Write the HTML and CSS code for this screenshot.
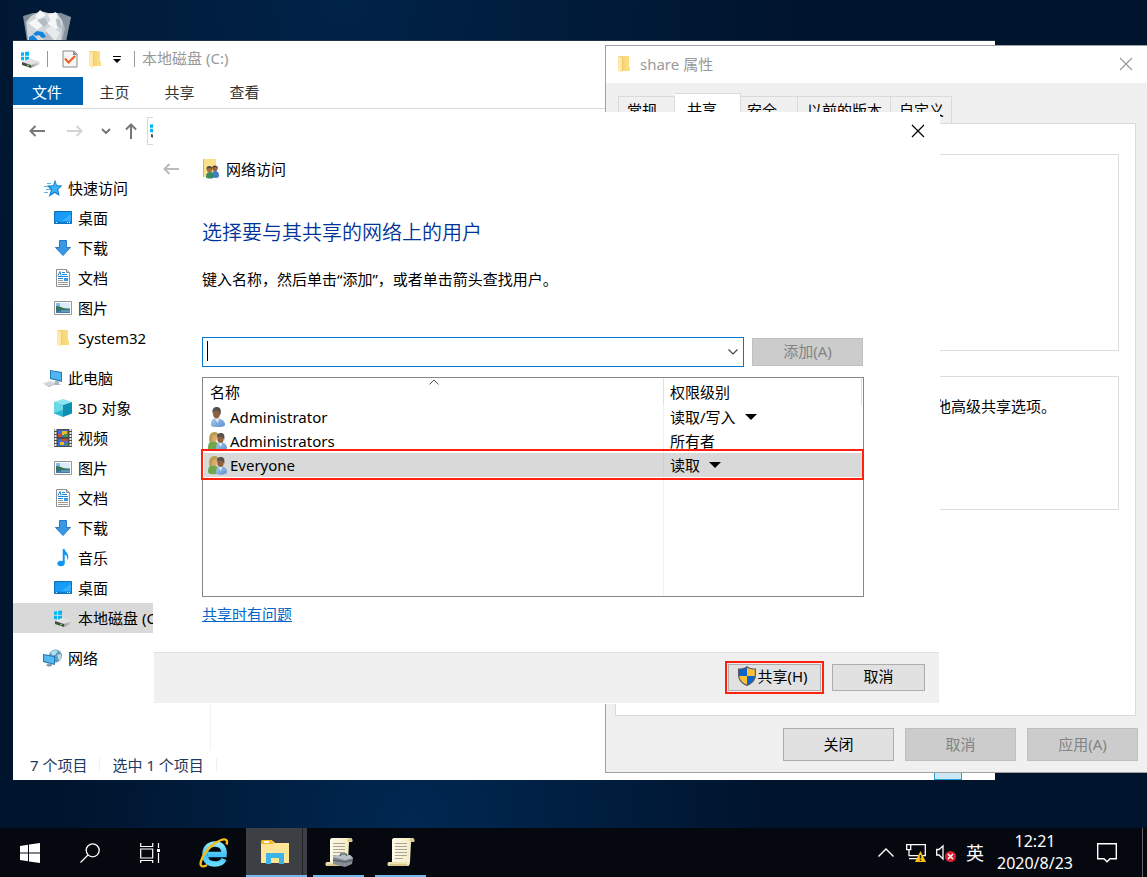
FILE: index.html
```html
<!DOCTYPE html>
<html lang="zh-CN">
<head>
<meta charset="utf-8">
<title>网络访问</title>
<link rel="stylesheet" href="styles.css">
</head>
<body>
<svg class="sprite" aria-hidden="true">
  <defs>
    <linearGradient id="g-blue" x1="0" y1="0" x2="1" y2="1"><stop offset="0" stop-color="#1593ee"/><stop offset=".6" stop-color="#18a0fb"/><stop offset=".62" stop-color="#3cb0ff"/><stop offset="1" stop-color="#2aa6fb"/></linearGradient>
    <linearGradient id="g-folder" x1="0" y1="0" x2="1" y2="0"><stop offset="0" stop-color="#f3cf6d"/><stop offset="1" stop-color="#fddf86"/></linearGradient>
    <linearGradient id="g-drive" x1="0" y1="0" x2="1" y2="0"><stop offset="0" stop-color="#9a9a9a"/><stop offset="1" stop-color="#e0e0e0"/></linearGradient>
    <linearGradient id="g-ie" x1="0" y1="0" x2="0" y2="1"><stop offset="0" stop-color="#8be6ff"/><stop offset=".6" stop-color="#3cc0f5"/><stop offset="1" stop-color="#64dcff"/></linearGradient>
    <linearGradient id="g-page" x1="0" y1="0" x2="1" y2="0"><stop offset="0" stop-color="#fffdf0"/><stop offset="1" stop-color="#f3e9bd"/></linearGradient>
    <linearGradient id="g-man" x1="0" y1="0" x2="1" y2="1"><stop offset="0" stop-color="#a9cdf0"/><stop offset="1" stop-color="#5b8fce"/></linearGradient>
  </defs>
  <symbol id="i-drive" viewBox="0 0 20 18">
    <path fill="#00b7f1" d="M1 2.500l3-.3v3.600H1zM5 2L9 1.600v4.200H5zM1 6.800h3v3.600l-3-.4zM5 6.800h4V11l-4-.5z"/>
    <path fill="#e2e2e2" d="M2 12l8-3.500 9.500 3L11 15z"/><path fill="#4a4a4a" d="M2 12l9 3v3L2 15z"/>
    <path fill="url(#g-drive)" d="M11 15l8.500-3.500v3L11 18z"/><circle cx="8" cy="15.500" r="1" fill="#5fe04c"/>
  </symbol>
  <symbol id="i-folder" viewBox="0 0 14 18">
    <path fill="url(#g-folder)" d="M1 1h11v10l1 1v4H3z"/><path fill="#ffe9a8" d="M1 1l4 2v15l-4-2z"/><path fill="#eec768" d="M5 4l1-1v12l-1 1z"/>
  </symbol>
  <symbol id="i-check" viewBox="0 0 16 18">
    <path fill="#f6f6f6" stroke="#8a8a8a" d="M1 1h11l3 3v13H1z"/><path fill="#8a8a8a" d="M11 1l4 4h-4z"/>
    <path fill="none" stroke="#f05a1c" stroke-width="2" d="M3 8.500l3.500 4L13 6"/>
  </symbol>
  <symbol id="i-star" viewBox="0 0 20 18">
    <path fill="#1583d2" d="M12 .5l2 5.800 5.500.3-4.200 3.900 1.300 6.500-5-3-6 4 2.300-6.700L4 6.500l6-.2z"/>
    <path fill="#3db2f6" d="M12 3l1.400 4.300 4 .3-3.400 3 1 4-3.500-2.200-3.800 2.400 1.500-4.300L6.500 7.500l4-.2z"/>
    <path stroke="#59b4ee" fill="none" d="M4 4.500h4M1 7.500h4M3 10.500h4M1 13.500h4"/>
  </symbol>
  <symbol id="i-desktop" viewBox="0 0 20 18">
    <path fill="url(#g-blue)" stroke="#0d6fb8" d="M1.500 2.500h17v12h-17z"/><path fill="#0f7ccb" d="M2 12.500h16v2H2z"/><path fill="#dff3ff" d="M3 13h1v1H3zM16 13h1v1h-1zM14 13h1v1h-1z"/>
  </symbol>
  <symbol id="i-down" viewBox="0 0 20 18">
    <path fill="#3b97e3" stroke="#2478c4" d="M6.500 1.500h7v7h4L10 16.500 2.500 8.500h4z"/>
  </symbol>
  <symbol id="i-doc" viewBox="0 0 20 18">
    <path fill="#fdfdfd" stroke="#8f8f8f" d="M3.500.5h10l3 3v14h-13z"/><path fill="#c9c9c9" stroke="#8f8f8f" d="M13.500.5v3h3"/>
    <path stroke="#1a84d6" d="M9 3.500h3M9 5.500h5M5 7.500h10M5 9.500h5"/><path fill="none" stroke="#1a84d6" d="M5 6.500l2-4 1 4"/>
    <path fill="#3b97e3" d="M11 9h4v3h-4z"/><path stroke="#9b9b9b" d="M5 11.500h5M5 13.500h10M5 15.500h10"/>
  </symbol>
  <symbol id="i-pic" viewBox="0 0 20 18">
    <path fill="#fff" stroke="#959595" d="M1.500 2.500h17v13h-17z"/><path fill="#83bdec" d="M3 4h14v10H3z"/><path fill="#dcebf7" d="M7 4h10v5H7z"/>
    <path fill="#39745d" d="M3 7c3-.5 6 2.500 14 3v2H3z"/><path fill="#3d79ad" d="M3 11.500h14V14H3z"/><path fill="#8fbbd8" d="M8 11.500h9v1H8z"/>
  </symbol>
  <symbol id="i-pc" viewBox="0 0 20 18">
    <path fill="#277bb8" d="M7 1l12 2v10L7 10z"/><path fill="#4fb4ef" d="M8 2l10 2v7.500L8 9z"/><path fill="#a9b6c0" d="M12 11.500l4 1v2l2 1-5 .8-3-1.300 2-1z"/>
    <path fill="#d4d8dc" d="M0 14.500l7-2.500 6 2-7 3z"/><path fill="#a2a8ae" d="M0 14.500l6 2.500 7-3v.6L6 18z"/>
  </symbol>
  <symbol id="i-cube" viewBox="0 0 20 18">
    <path fill="#8ce5f0" d="M10 0l9 3-9 3-9-3z"/><path fill="#2cb6d1" d="M1 3l9 3v12l-9-3.500z"/><path fill="#0c8fb0" d="M10 6l9-3v11.500L10 18z"/><path fill="#6bd8e7" d="M1 3l9 3v5l-9 3z"/>
  </symbol>
  <symbol id="i-film" viewBox="0 0 20 18">
    <path fill="#4b4b4b" d="M1 0h18v18H1z"/><path stroke="#eee" stroke-width="2" stroke-dasharray="2 1" d="M2.500 0v18M17.500 0v18"/>
    <path fill="#3c6fd6" d="M5 1h10v7H5zM5 10h10v7H5z"/><path fill="#f0b82a" d="M9 2h5v4H9zM7 13h4v3H7z"/><path fill="#d64b2e" d="M5 5h4v3H5zM9 10h5v2H9z"/><path fill="#3d9a4b" d="M11 5h4v3h-4zM12 14h3v3h-3z"/>
  </symbol>
  <symbol id="i-note" viewBox="0 0 20 18">
    <ellipse cx="8" cy="14.500" rx="3.600" ry="2.800" fill="#0d97f2"/><path fill="#0d97f2" d="M9.700 0h2c.3 3.500 4.300 4 3.600 9.500-.3 1-.8 1.500-1 1.300.5-3-.8-4.500-2.600-5v9h-2z"/>
  </symbol>
  <symbol id="i-net" viewBox="0 0 20 18">
    <circle cx="12.500" cy="7" r="6.500" fill="#5e9dbd"/><path fill="#b9dceb" d="M8 3c2-2 5-2.500 7-1l-3 4-3 1zM14 6l4-1c1 3 0 6-2 7z"/>
    <path fill="#2477b5" d="M0 5l12 2v9L0 13z"/><path fill="#55baf2" d="M1 6.200l10 1.700v6.800L1 12z"/><path fill="#8c9aa5" d="M5 14.300l4 1v1.500l-3 1-3-1.300z"/>
  </symbol>
  <symbol id="i-man" viewBox="0 0 20 20">
    <path fill="url(#g-man)" d="M3 18c0-5 2-7 5-7 5 0 9 3 9 6.500 0 2-3 2.500-7 2.500s-7 0-7-2z"/><path fill="#e8eef5" d="M6 11l4 5 1-5z"/>
    <ellipse cx="8.500" cy="6" rx="3.700" ry="5.500" fill="#8d6242"/><path fill="#51504e" d="M4.500 6C4 1 6.500 0 9 0c3.500 0 4.500 3 3.500 8-1-4-3-5-7-4z"/>
  </symbol>
  <symbol id="i-group" viewBox="0 0 20 20">
    <path fill="#6fa64e" d="M0 17c0-5 2-7 5-7s6 2 6 7c0 3-11 3-11 0z"/><ellipse cx="6" cy="6.500" rx="3" ry="4.500" fill="#dfaa72"/>
    <path fill="#b8a04e" d="M1.500 11C0 4 3 1 6.500 1c3-.2 4 2 3.500 4C8 4 6 4 5 5c-1 2-1 4-.5 6z"/>
    <path fill="url(#g-man)" d="M8 18c0-5 2-7 4.500-7 4 0 6.500 3 6.500 6s-11 4-11 1z"/><path fill="#edf2f8" d="M10 11l3 5 1-5z"/>
    <ellipse cx="12.500" cy="7.500" rx="3.200" ry="4.500" fill="#8d6242"/><path fill="#54524f" d="M9 6.500c-.3-4 2-4.500 4-4.500 3 0 4 2 3.200 7-1-3-2.500-4-5-3.500z"/>
  </symbol>
  <symbol id="i-share" viewBox="0 0 18 20">
    <path fill="#fbe08c" d="M1 0h13v18H1z"/><path fill="#d9b65c" d="M1 0h1v18H1z"/>
    <path fill="#417fc4" d="M10 16c0-3 1-4 3-4 3 0 4 2 4 5s-7 2-7 0z"/><circle cx="13" cy="9.500" r="2.600" fill="#98633c"/><path fill="#4a3b30" d="M10 9c0-3.500 6-3.500 6 .5-1-1.500-3-2-6-.5z"/>
    <path fill="#3b8a64" d="M4 18c0-4 2-5 4-5s4 1 4 5c0 2-8 2-8 0z"/><circle cx="7.500" cy="10.500" r="2.800" fill="#a4703c"/><path fill="#4c4435" d="M4.500 10C4 6 10.500 6 10.500 10.500 9 8.500 7 8.500 4.500 10z"/>
  </symbol>
  <symbol id="i-shield" viewBox="0 0 18 20">
    <path fill="#585c60" d="M9 0c2 2 5 2.500 9 2.500V9c0 5-4 9-9 11-5-2-9-6-9-11V2.500C4 2.500 7 2 9 0z"/>
    <path fill="#0a64cc" d="M9 1.500V10H1.200V3.500C4.500 3.500 7 3 9 1.500zM9 10h7.700c-.5 4-3.500 7-7.700 8.600z"/><path fill="#ffbf35" d="M9 1.500V10h7.800V3.500C13.500 3.500 11 3 9 1.500zM9 10H1.300c.5 4 3.500 7 7.700 8.600z"/>
  </symbol>
  <symbol id="i-back" viewBox="0 0 16 12"><path fill="none" stroke="currentColor" stroke-width="2" d="M6.500 1L1.500 6l5 5M1.500 6H16"/></symbol>
  <symbol id="i-fwd" viewBox="0 0 16 12"><path fill="none" stroke="currentColor" stroke-width="2" d="M9.500 1l5 5-5 5M14.500 6H0"/></symbol>
  <symbol id="i-x" viewBox="0 0 14 14"><path fill="none" stroke="currentColor" stroke-width="1.200" d="M1 1l12 12M13 1L1 13"/></symbol>
  <symbol id="i-chev" viewBox="0 0 10 6"><path fill="none" stroke="currentColor" stroke-width="1.200" d="M.5.5L5 5 9.500.5"/></symbol>
  <symbol id="i-scroll" viewBox="0 0 28 30">
    <path fill="url(#g-page)" d="M5 3c0-1 1-2 2-2h18c2 0 3 2 2 4h-3l-1 20c0 2-1 4-2 4H2c-2 0-2-4 0-4h3z"/><path fill="#d9c98c" d="M23 5c-1-2 0-4 2-4s3 2 2 4zM1 26h18l2 3H3c-1 0-2-1-2-3z"/><path fill="#efe3b0" d="M2 25h18v2H2z"/>
    <path stroke="#a9a39b" d="M8 6.500h12M8 9.500h12M8 12.500h12M8 15.500h12M8 18.500h12M8 21.500h8"/>
  </symbol>
</svg>

<main class="desktop">
  <svg class="recycle" viewBox="0 0 48 32" aria-label="回收站">
    <path fill="#a9b4be" opacity=".75" d="M0 7l10-3h28l10 4-5 24H4z"/><path fill="#cfd5da" d="M3 13l5-6 9-5 8 2 9 0 5 7 3 8-3 13H5z"/>
    <path fill="#f4f6f7" d="M12 8l5-7 6 5-6 4zM25 6l8-3 2 6-7 3zM5 14l9-5 8 6-8 6zM24 14l7-5 8 6-7 6z"/>
    <path fill="#b3bcc4" d="M14 11l8-2 3 5-4 4zM33 10l4 1 2 9-5-3zM20 26l6-6 7 5-4 7h-9z"/><path fill="#e6eaed" d="M22 21l7-4 8 7-5 8z"/>
    <path fill="#0f86dc" d="M10 25l4-3 6 1 3 5-4 1-3-3-3 1zM6 28l4-2 4 4v2H6z"/><path fill="#8d98a3" opacity=".5" d="M40 8l8 0-5 24h-5z"/>
  </svg>

  <section class="window explorer">
    <header class="ex-title">
      <svg class="ic20"><use href="#i-drive"/></svg><i class="bar"></i>
      <svg class="ic-check"><use href="#i-check"/></svg><svg class="ic-folder"><use href="#i-folder"/></svg>
      <svg class="ic-more" viewBox="0 0 8 7"><path d="M0 0h8v1H0zM0 3h8L4 7z"/></svg><i class="bar"></i>
      <span>本地磁盘 (C:)</span>
    </header>
    <nav class="ribbon">
      <a class="file" href="#">文件</a><a href="#">主页</a><a href="#">共享</a><a href="#">查看</a>
    </nav>
    <div class="ex-nav">
      <svg class="arrow"><use href="#i-back"/></svg>
      <svg class="arrow dim"><use href="#i-fwd"/></svg>
      <svg class="recent" viewBox="0 0 10 6"><path fill="none" stroke="currentColor" stroke-width="2" d="M1 1l4 4 4-4"/></svg>
      <svg class="up" viewBox="0 0 12 16"><path fill="none" stroke="currentColor" stroke-width="2" d="M1 6.500l5-5 5 5M6 1.500V16"/></svg>
      <div class="address"><svg class="ic20"><use href="#i-drive"/></svg></div>
    </div>
    <div class="ex-body">
      <ul class="tree">
        <li><svg class="ic20"><use href="#i-star"/></svg>快速访问</li>
        <li class="sub"><svg class="ic20"><use href="#i-desktop"/></svg>桌面</li>
        <li class="sub"><svg class="ic20"><use href="#i-down"/></svg>下载</li>
        <li class="sub"><svg class="ic20"><use href="#i-doc"/></svg>文档</li>
        <li class="sub"><svg class="ic20"><use href="#i-pic"/></svg>图片</li>
        <li class="sub"><svg class="ic20"><use href="#i-folder"/></svg>System32</li>
        <li class="group"><svg class="ic20"><use href="#i-pc"/></svg>此电脑</li>
        <li class="sub"><svg class="ic20"><use href="#i-cube"/></svg>3D 对象</li>
        <li class="sub"><svg class="ic20"><use href="#i-film"/></svg>视频</li>
        <li class="sub"><svg class="ic20"><use href="#i-pic"/></svg>图片</li>
        <li class="sub"><svg class="ic20"><use href="#i-doc"/></svg>文档</li>
        <li class="sub"><svg class="ic20"><use href="#i-down"/></svg>下载</li>
        <li class="sub"><svg class="ic20"><use href="#i-note"/></svg>音乐</li>
        <li class="sub"><svg class="ic20"><use href="#i-desktop"/></svg>桌面</li>
        <li class="sub selected"><svg class="ic20"><use href="#i-drive"/></svg>本地磁盘 (C:)</li>
        <li class="group"><svg class="ic20"><use href="#i-net"/></svg>网络</li>
      </ul>
    </div>
    <footer class="status"><span>7 个项目</span><span>选中 1 个项目</span><i class="view"></i></footer>
  </section>

  <section class="window props">
    <header class="pr-title"><svg class="ic-folder"><use href="#i-folder"/></svg><span>share 属性</span><svg class="ic-x"><use href="#i-x"/></svg></header>
    <div class="pr-body">
      <div class="tabs"><button>常规</button><button class="on">共享</button><button class="safe">安全</button><button class="wide">以前的版本</button><button>自定义</button></div>
      <div class="panel">
        <div class="box box1"></div>
        <div class="box box2">他高级共享选项。</div>
      </div>
      <div class="actions"><button class="btn">关闭</button><button class="btn" disabled>取消</button><button class="btn" disabled>应用(A)</button></div>
    </div>
  </section>

  <section class="window dialog">
    <button class="close" aria-label="关闭"><svg class="ic-x"><use href="#i-x"/></svg></button>
    <header class="dl-title"><svg class="arrow"><use href="#i-back"/></svg><svg class="ic-share"><use href="#i-share"/></svg><span>网络访问</span></header>
    <div class="dl-body">
      <h1>选择要与其共享的网络上的用户</h1>
      <label for="user">键入名称，然后单击<span class="q">“</span>添加<span class="q">”</span>，或者单击箭头查找用户。</label>
      <div class="entry">
        <div class="combo"><i class="caret"></i><input id="user" type="text"><button aria-label="展开"><svg class="ic-chev"><use href="#i-chev"/></svg></button></div>
        <button class="btn" disabled>添加(A)</button>
      </div>
      <div class="list">
        <table>
          <thead><tr><th>名称<svg class="sort" viewBox="0 0 10 6"><path fill="none" stroke="#555" d="M.5 5.500L5 1l4.500 4.500"/></svg></th><th class="level">权限级别</th></tr></thead>
          <tbody>
            <tr><td><div class="cell"><svg class="ic-user"><use href="#i-man"/></svg>Administrator</div></td><td><button class="perm">读取/写入<i class="tri"></i></button></td></tr>
            <tr><td><div class="cell"><svg class="ic-user"><use href="#i-group"/></svg>Administrators</div></td><td>所有者</td></tr>
            <tr class="picked"><td><div class="cell"><svg class="ic-user"><use href="#i-group"/></svg>Everyone</div></td><td><button class="perm">读取<i class="tri"></i></button></td></tr>
            <tr class="rest"><td></td><td></td></tr>
          </tbody>
        </table>
      </div>
      <a class="help" href="#">共享时有问题</a>
    </div>
    <footer class="dl-foot"><button class="btn share"><svg class="ic-shield"><use href="#i-shield"/></svg>共享(H)</button><button class="btn">取消</button></footer>
  </section>

  <footer class="taskbar">
    <div class="slot"><svg width="20" height="20" viewBox="0 0 20 20"><path fill="#fff" d="M0 3l8-1.200v7.700H0zM9 1.600L20 0v9.500H9zM0 10.500h8v7.700L0 17zM9 10.500h11V20L9 18.400z"/></svg></div>
    <div class="slot"><svg width="20" height="20" viewBox="0 0 20 20" fill="none" stroke="#fff" stroke-width="1.300"><circle cx="12.700" cy="7.300" r="6.500"/><path d="M8 12L.5 19.500"/></svg></div>
    <div class="slot"><svg width="20" height="20" viewBox="0 0 20 20" fill="none" stroke="#fff" stroke-width="1.200"><path d="M.7 0v3.500h12V0M.7 6h12v9H.7zM.7 20v-2.500h12V20M18.500 0v5M18.500 10v10"/><path fill="#fff" stroke="none" d="M17 6h3v3h-3z"/></svg></div>
    <div class="slot ie"><svg width="30" height="30" viewBox="0 0 30 30"><path fill="none" stroke="url(#g-ie)" stroke-width="5.500" d="M9 16.500h16C25.500 9 21.500 6 16 6S6 10 6 16.500 10 26 16 26c4.500 0 7.500-1.500 9-5"/><path fill="none" stroke="#f3bd1d" stroke-width="2.400" d="M8 27c-5 3-8 1-5.500-5C5 14 13 5.500 21 2.500c6-2.500 8-.5 6.500 4"/></svg></div>
    <div class="slot active"><svg width="28" height="24" viewBox="0 0 28 24"><path fill="#ffe596" d="M0 1h12l2 2h14v20H0z"/><path fill="#f7b91e" d="M1 0h10l2 4H0V1z"/><path fill="#fff" d="M3 1h5v2H3z"/><path fill="#3cb4e7" d="M5 13h18v11h-5v-6h-8v6H5z"/></svg></div>
    <div class="slot open"><svg width="28" height="30" viewBox="0 0 28 30"><use href="#i-scroll"/><path fill="#858d95" d="M8 20l3-2h14l3 3-1 6-7 3-12-3z"/><path fill="#b9c1c8" d="M8 20l3-2h14l3 3-8 2z"/><path fill="none" stroke="#5c646b" stroke-width="1.500" d="M15 19l1-2h5l1 2M8 23l12 2 8-2"/></svg></div>
    <div class="slot open"><svg width="28" height="30"><use href="#i-scroll"/></svg></div>
    <div class="tray">
      <svg width="16" height="9" viewBox="0 0 16 9"><path fill="none" stroke="#fff" stroke-width="1.400" d="M.5 8.500L8 1l7.500 7.500"/></svg>
      <svg class="t-net" width="20" height="18" viewBox="0 0 20 18"><path fill="none" stroke="#fff" stroke-width="1.300" d="M5 .7h14.300v11H3V6M3 14.700h8M.7.700h4v5h-4z"/><path fill="#ffc20e" d="M14.500 7l5.500 11H9z"/><path stroke="#222" stroke-width="1.500" d="M14.500 11v3.500M14.500 15.500V17"/></svg>
      <svg class="t-vol" width="20" height="18" viewBox="0 0 20 18"><path fill="none" stroke="#fff" stroke-width="1.300" d="M.7 5.500H3L7 2v13l-4-4H.7z"/><circle cx="14.500" cy="12.500" r="5.500" fill="#d92232"/><path stroke="#fff" stroke-width="1.500" d="M12 10l5 5M17 10l-5 5"/></svg>
      <span class="ime">英</span>
      <time>12:21<br>2020/8/23</time>
      <svg width="20" height="20" viewBox="0 0 20 20"><path fill="none" stroke="#fff" stroke-width="1.400" d="M.7.700h18.600v15H13l-3 3-3-3H.7z"/></svg>
    </div>
    <i class="peek"></i>
  </footer>
</main>
</body>
</html>
```

FILE: styles.css
```css
* { box-sizing: border-box; }
body {
  margin: 0;
  font: 15px/20px "Noto Sans", "Noto Sans CJK SC", sans-serif;
  color: #000;
}
button, input { font: inherit; color: inherit; }
svg { display: block; flex: none; }
.sprite { position: absolute; width: 0; height: 0; }

.desktop {
  position: relative;
  display: flex;
  flex-direction: column;
  justify-content: flex-end;
  height: 100vh;
  overflow: hidden;
  background:
    radial-gradient(ellipse at 36% 94%, #002852 0, rgba(0, 40, 82, 0) 34%),
    radial-gradient(ellipse at 30% 0, #002348 0, rgba(0, 35, 72, 0) 40%),
    #00142d;
}
.recycle { position: absolute; left: 23px; top: 9px; width: 48px; height: 32px; }
.window { position: absolute; display: flex; flex-direction: column; }

.ic20 { width: 20px; height: 18px; }
.ic-folder { width: 14px; height: 18px; }
.ic-x { width: 14px; height: 14px; }
.arrow { width: 16px; height: 12px; color: #777; }
.dim { color: #d4d4d4; }

/* File explorer */
.explorer { inset: 40px 152px 97px 13px; overflow: hidden; background: #fff; border-top: 1px solid #1f3448; }
.ex-title { display: flex; align-items: center; height: 36px; padding-left: 7px; color: #999; }
.ex-title span { padding-bottom: 2px; }
.ex-title .bar { width: 1px; height: 16px; margin: 0 7px 0 7px; background: #999; }
.ic-check { width: 16px; height: 18px; margin-left: 7px; }
.ex-title .ic-folder { margin: 0 11px 0 10px; }
.ic-more { width: 8px; height: 7px; }
.ex-title .ic-more + .bar { margin-left: 13px; }
.ribbon { display: flex; height: 32px; border-bottom: 1px solid #dadbdc; }
.ribbon a { width: 65px; height: 28px; line-height: 30px; padding-right: 2px; text-align: center; color: #333; text-decoration: none; }
.ribbon .file { width: 70px; background: #0063b1; color: #fff; }
.ex-nav { display: flex; align-items: center; height: 44px; padding-left: 16px; color: #777; }
.ex-nav .arrow + .arrow { margin-left: 22px; }
.recent { width: 10px; height: 6px; margin-left: 18px; }
.up { width: 12px; height: 16px; margin-left: 14px; }
.address { display: flex; align-items: center; flex: 1; height: 28px; margin-left: 10px; padding-left: 1px; border: 1px solid #d9d9d9; }
.ex-body { flex: 1; min-height: 0; padding-top: 20px; display: flex; }
.tree { width: 198px; margin: 0; padding: 0; list-style: none; border-right: 1px solid #f2f2f2; }
.tree li { display: flex; align-items: center; gap: 5px; height: 30px; padding-left: 30px; white-space: nowrap; }
.tree .sub { padding-left: 40px; }
.tree .group { margin-top: 10px; }
.tree .selected { background: #d9d9d9; }
.status { display: flex; align-items: center; height: 30px; padding-left: 17px; color: #1e395b; }
.status span { height: 14px; line-height: 14px; padding-right: 12px; margin-right: 12px; border-right: 1px solid #f0f0f0; }
.view { align-self: flex-end; width: 28px; height: 25px; margin: 0 33px 0 auto; background: #cbe8f6; border: 1px solid #26a0da; }

/* Folder properties */
.props { inset: 45px 0 104px 605px; overflow: hidden; border: 1px solid #a0a0a0; border-right: 0; background: #f0f0f0; }
.pr-title { display: flex; align-items: center; gap: 9px; height: 37px; padding: 0 14px 2px 11px; background: #fff; color: #999; }
.pr-title .ic-x { margin-left: auto; }
.pr-body { display: flex; flex-direction: column; flex: 1; min-height: 0; padding: 10px 11px 11px 9px; }
.tabs { display: flex; align-items: flex-end; height: 30px; padding-left: 3px; }
.tabs button { height: 27px; padding: 0 8px; border: 1px solid #dadada; border-width: 1px 1px 0 0; background: #f0f0f0; text-align: left; width: 57px; white-space: nowrap; }
.tabs button:first-child { border-left-width: 1px; }
.tabs .on { width: 66px; height: 30px; padding-left: 12px; background: #fff; }
.tabs .safe { padding-left: 6px; }
.tabs .wide { width: 93px; padding-left: 9px; }
.tabs button:last-child { width: 61px; }
.panel { flex: 1; padding: 30px 16px 0 18px; border: 1px solid #dadada; background: #fff; }
.box { border: 1px solid #dcdcdc; }
.box1 { height: 197px; }
.box2 { height: 134px; margin-top: 25px; padding: 19px 62px 0 0; text-align: right; }
.actions { display: flex; justify-content: flex-end; gap: 11px; padding-top: 12px; margin-right: -2px; }
.btn { display: flex; align-items: center; justify-content: center; width: 111px; height: 33px; padding: 0 0 2px; border: 1px solid #adadad; background: #e1e1e1; }
.btn:disabled { border-color: #bfbfbf; background: #ccc; color: #838383; }

/* Network access dialog */
.dialog { left: 153px; right: 207px; top: 112px; background: #fff; padding: 0 1px 1px; }
.close { align-self: flex-end; height: 38px; padding: 0 14px; border: 0; background: none; }
.dl-title { display: flex; align-items: center; height: 38px; padding-left: 9px; }
.dl-title .arrow { color: #bbb; }
.ic-share { width: 18px; height: 20px; margin: 0 6px 0 23px; }
.dl-body { display: flex; flex-direction: column; align-items: flex-start; padding: 29px 76px 0 48px; height: 464px; }
h1 { margin: 0 0 20px; font-size: 20px; line-height: 32px; font-weight: 350; color: #039; }
.q { font-family: "Noto Sans", sans-serif; }
.entry { display: flex; align-items: center; gap: 8px; align-self: stretch; margin-top: 48px; }
.combo { position: relative; display: flex; flex: 1; height: 30px; border: 1px solid #0078d7; }
.combo input { flex: 1; min-width: 0; border: 0; padding: 0 6px; outline: 0; }
.combo button { width: 20px; padding: 0 5px; border: 0; background: none; color: #444; }
.caret { position: absolute; left: 4px; top: 3px; width: 1px; height: 20px; background: #000; }
.ic-chev { width: 10px; height: 6px; }
.entry .btn { height: 28px; }
.list { align-self: stretch; height: 220px; margin: 10px -1px 0 0; padding: 0 1px; border: 1px solid #828790; }
table { width: 100%; height: 100%; border-spacing: 0; }
th, td { height: 24px; padding: 0 6px; text-align: left; font-weight: 400; border-right: 1px solid #edf2f9; white-space: nowrap; }
tr > :last-child { width: 198px; }
td:last-child { border-right: 0; }
th { position: relative; height: 27px; border-right-color: #e0e0e0; }
.sort { position: absolute; left: 225px; top: 1px; width: 10px; height: 6px; }
.cell { display: flex; align-items: center; gap: 2px; margin-left: -2px; }
.ic-user { width: 20px; height: 20px; }
.perm { display: flex; align-items: center; gap: 9px; padding: 0; border: 0; background: none; }
.tri { border: 6px solid transparent; border-top-color: #000; border-bottom: 0; }
.picked { position: relative; }
.picked td { background: #d9d9d9; border-right-color: #c9d2dc; }
.picked::after { content: ""; position: absolute; inset: -4px -2px -3px -3px; border: 2px solid #ff2010; }
.rest td { height: auto; }
.help { margin-top: 7px; color: #06c; }
.dl-foot { display: flex; align-items: center; justify-content: flex-end; gap: 11px; height: 51px; padding: 0 14px 2px 0; border-top: 1px solid #dfdfdf; background: #f0f0f0; }
.dl-foot .btn { width: 93px; height: 27px; }
.dl-foot .share { padding-right: 3px; outline: 2px solid #ff2010; outline-offset: 1px; }
.ic-shield { width: 18px; height: 20px; margin-right: 1px; }

/* Taskbar */
.taskbar { display: flex; height: 49px; background: #05080f; color: #fff; }
.slot { display: flex; align-items: center; justify-content: center; width: 60px; }
.slot.ie { width: 66px; padding-left: 2px; }
.slot.active { width: 61px; padding-right: 3px; background: linear-gradient(90deg, #3c3f43 56px, #222 56px, #222 57px, #3c3f43 57px); border-bottom: 2px solid #76b9ed; }
.slot.open { width: 51px; margin: 0 5px 0 6px; border-bottom: 2px solid #76b9ed; }
.tray { display: flex; align-items: center; margin-left: auto; padding-right: 25px; }
.t-net { margin-left: 12px; }
.t-vol { margin-left: 10px; }
.ime { margin-left: 10px; font-size: 18px; }
time { width: 80px; margin: 0 22px 0 11px; padding-bottom: 2px; font-size: 16px; line-height: 22px; text-align: center; }
.peek { width: 5px; border-left: 1px solid #666; }
```
